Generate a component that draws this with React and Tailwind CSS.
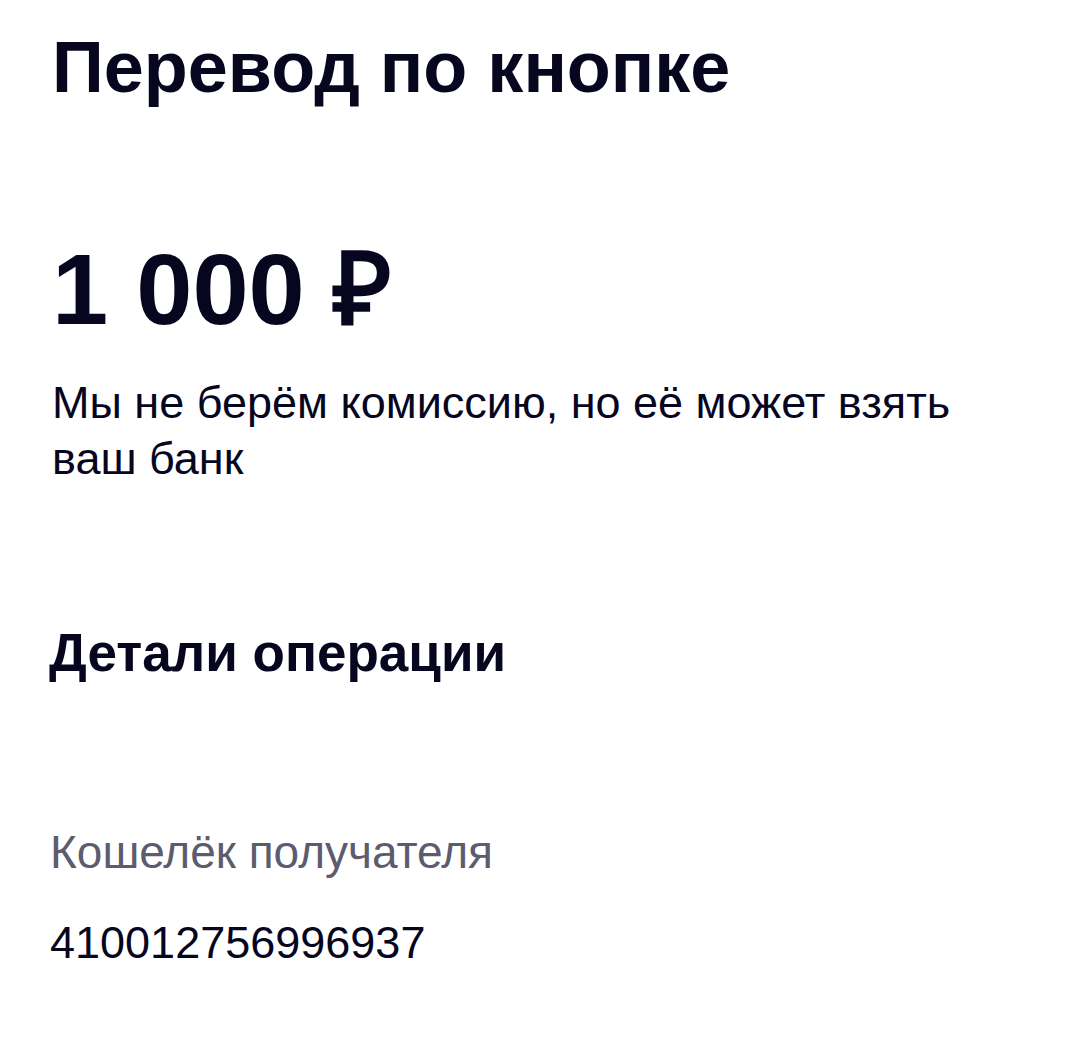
export default function App() {
  return (
    <div className="min-h-[1038px] bg-white pl-[52px] text-[#06061f]" style={{ fontFamily: '"Liberation Sans", Arial, sans-serif' }}>
      <h1 className="pt-[31px] text-[72px] font-bold leading-none">Перевод по кнопке</h1>

      <div className="mt-[136px] text-[101px] font-bold leading-none">1 000 ₽</div>

      <p className="mt-[35px] text-[45px] leading-[56px]">
        Мы не берём комиссию, но её может взять
        <br />
        ваш банк
      </p>

      <h2 className="mt-[139px] -ml-[3px] text-[53px] font-bold leading-none">Детали операции</h2>

      <div className="mt-[150px] -ml-[2px] text-[46px] leading-none text-[#5c5c6e]">Кошелёк получателя</div>
      <div className="mt-[45px] -ml-[2px] text-[45px] leading-none">410012756996937</div>
    </div>
  );
}
